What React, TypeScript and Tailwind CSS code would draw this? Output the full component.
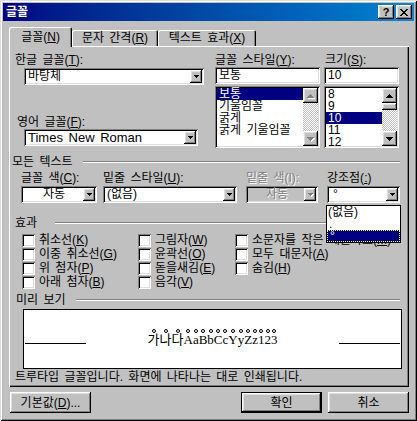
import React from "react";

const sunken =
  "shadow-[inset_1px_1px_0_#808080,inset_-1px_-1px_0_#ffffff,inset_2px_2px_0_#000000,inset_-2px_-2px_0_#dfdfdf]";
const raised =
  "shadow-[inset_-1px_-1px_0_#000000,inset_1px_1px_0_#ffffff,inset_-2px_-2px_0_#808080,inset_2px_2px_0_#dfdfdf]";
const dither =
  "bg-[image:repeating-conic-gradient(#c0c0c0_0_25%,#ffffff_0_50%)] bg-[length:2px_2px]";
const grayText = "text-[#808080] [text-shadow:1px_1px_0_#ffffff]";

const Down = ({ disabled, big }: { disabled?: boolean; big?: boolean }) => (
  <svg
    width={big ? 7 : 5}
    height={big ? 4 : 3}
    shapeRendering="crispEdges"
    className={disabled ? "drop-shadow-[1px_1px_0_#ffffff]" : ""}
  >
    <path
      d={big ? "M0 0h7v1H0zM1 1h5v1H1zM2 2h3v1H2zM3 3h1v1H3z" : "M0 0h5v1H0zM1 1h3v1H1zM2 2h1v1H2z"}
      fill={disabled ? "#808080" : "#000"}
    />
  </svg>
);

const Up = ({ disabled }: { disabled?: boolean }) => (
  <svg width={7} height={4} shapeRendering="crispEdges" className={disabled ? "drop-shadow-[1px_1px_0_#ffffff]" : ""}>
    <path d="M3 0h1v1H3zM2 1h3v1H2zM1 2h5v1H1zM0 3h7v1H0z" fill={disabled ? "#808080" : "#000"} />
  </svg>
);

function ArrowBtn({ disabled }: { disabled?: boolean }) {
  return (
    <div className={`w-[12px] h-[13px] shrink-0 bg-[#c0c0c0] flex items-center justify-center ${raised}`}>
      <Down disabled={disabled} />
    </div>
  );
}

function Combo({
  w,
  children,
  disabled,
  center,
}: {
  w: string;
  children: React.ReactNode;
  disabled?: boolean;
  center?: boolean;
}) {
  return (
    <div className={`${sunken} ${disabled ? "bg-[#c0c0c0]" : "bg-white"} h-[17px] flex items-center p-[2px] ${w}`}>
      <div
        className={`flex-1 pl-[2px] leading-[13px] whitespace-nowrap ${center ? "text-center" : ""} ${
          disabled ? grayText : ""
        }`}
      >
        {children}
      </div>
      <ArrowBtn disabled={disabled} />
    </div>
  );
}

function Check({ children }: { children: React.ReactNode }) {
  return (
    <div className="h-[14px] flex items-center whitespace-nowrap">
      <div className={`w-[13px] h-[13px] shrink-0 bg-white ${sunken}`} />
      <span className="ml-[4px]">{children}</span>
    </div>
  );
}

function Header({ label, gap, ml, w }: { label: string; gap: string; ml: string; w: string }) {
  return (
    <div className={`h-[14px] flex items-center ${ml} ${w}`}>
      <span className="whitespace-nowrap">{label}</span>
      <div className={`flex-1 h-[2px] border-t border-t-[#808080] border-b border-b-white ${gap}`} />
    </div>
  );
}

function Btn({ children, def, className }: { children: React.ReactNode; def?: boolean; className?: string }) {
  return (
    <div
      className={`w-[81px] h-[21px] flex items-center justify-center ${
        def ? "border border-black" : ""
      } ${className ?? ""}`}
    >
      <div className={`w-full h-full flex items-center justify-center ${raised}`}>{children}</div>
    </div>
  );
}

const styles = ["보통", "기울임꼴", "굵게", "굵게 기울임꼴"];
const sizes = ["8", "9", "10", "11", "12"];
const preview = "가나다AaBbCcYyZz123".split("");

export default function App() {
  return (
    <div className="w-[417px] h-[421px] bg-[#c0c0c0] p-[3px] font-[Liberation_Sans,Noto_Sans_CJK_KR,sans-serif] text-[12px] leading-[14px] [word-spacing:2px] text-black select-none shadow-[inset_1px_1px_0_#dfdfdf,inset_-1px_-1px_0_#000000,inset_2px_2px_0_#ffffff,inset_-2px_-2px_0_#808080]">
      {/* title bar */}
      <div className="h-[18px] flex items-center pl-[3px] pr-[2px] bg-linear-to-r from-[#000080] to-[#1084d0]">
        <span className="text-white font-bold flex-1">글꼴</span>
        <div className={`w-[16px] h-[14px] bg-[#c0c0c0] flex items-center justify-center font-bold text-[11px] leading-[11px] ${raised}`}>
          ?
        </div>
        <div className={`w-[16px] h-[14px] ml-[2px] bg-[#c0c0c0] flex items-center justify-center ${raised}`}>
          <svg width={8} height={7} shapeRendering="crispEdges">
            <path
              d="M0 0h2v1H0zM6 0h2v1H6zM1 1h2v1H1zM5 1h2v1H5zM2 2h4v1H2zM3 3h2v1H3zM2 4h4v1H2zM1 5h2v1H1zM5 5h2v1H5zM0 6h2v1H0zM6 6h2v1H6z"
              fill="#000"
            />
          </svg>
        </div>
      </div>

      {/* tabs */}
      <div className="mt-[6px] ml-[6px] h-[19px] flex items-end">
        <div className="relative z-10 w-[63px] h-[20px] -mb-[1px] bg-[#c0c0c0] rounded-t-[2px] flex items-center justify-center pb-[1px] shadow-[inset_1px_1px_0_#ffffff,inset_-1px_0_0_#000000,inset_-2px_0_0_#808080]">
          글꼴(<u>N</u>)
        </div>
        <div className="w-[86px] h-[16px] rounded-t-[2px] flex items-center justify-center shadow-[inset_1px_1px_0_#ffffff,inset_-1px_0_0_#000000,inset_-2px_0_0_#808080]">
          문자 간격(<u>R</u>)
        </div>
        <div className="w-[98px] h-[16px] rounded-t-[2px] flex items-center justify-center shadow-[inset_1px_1px_0_#ffffff,inset_-1px_0_0_#000000,inset_-2px_0_0_#808080]">
          텍스트 효과(<u>X</u>)
        </div>
      </div>

      {/* panel */}
      <div className="ml-[6px] w-[400px] h-[341px] shadow-[inset_1px_1px_0_#ffffff,inset_-1px_-1px_0_#000000,inset_-2px_-2px_0_#808080]">
        {/* fonts row */}
        <div className="pt-[7px] ml-[6px] flex">
          <div className="w-[200px]">
            <div>
              한글 글꼴(<u>T</u>):
            </div>
            <div className="ml-[9px] mt-[1px]">
              <Combo w="w-[180px]">바탕체</Combo>
            </div>
            <div className="mt-[30px] ml-[2px]">
              영어 글꼴(<u>F</u>):
            </div>
            <div className="ml-[9px]">
              <Combo w="w-[174px]">
                <span className="text-[13px]">Times New Roman</span>
              </Combo>
            </div>
          </div>
          <div className="w-[109px]">
            <div>
              글꼴 스타일(<u>Y</u>):
            </div>
            <div className={`w-[105px] h-[17px] bg-white p-[2px] pl-[4px] leading-[13px] ${sunken}`}>보통</div>
            <div className={`mt-[2px] w-[105px] h-[62px] bg-white p-[2px] flex ${sunken}`}>
              <div className="flex-1 flex flex-col">
                {styles.map((s, i) => (
                  <div
                    key={s}
                    className={`h-[12px] leading-[12px] pl-[2px] whitespace-nowrap ${
                      i === 0 ? "bg-[#000080] text-white" : ""
                    }`}
                  >
                    {s}
                  </div>
                ))}
              </div>
              <div className="w-[15px] flex flex-col">
                <div className={`h-[15px] bg-[#c0c0c0] flex items-center justify-center ${raised}`}>
                  <Up disabled />
                </div>
                <div className={`flex-1 ${dither}`} />
                <div className={`h-[15px] bg-[#c0c0c0] flex items-center justify-center ${raised}`}>
                  <Down big disabled />
                </div>
              </div>
            </div>
          </div>
          <div className="w-[75px]">
            <div className="ml-[1px]">
              크기(<u>S</u>):
            </div>
            <div className={`w-[75px] h-[17px] bg-white p-[2px] pl-[4px] leading-[13px] ${sunken}`}>10</div>
            <div className={`mt-[2px] w-[75px] h-[62px] bg-white p-[2px] flex ${sunken}`}>
              <div className="flex-1 flex flex-col">
                {sizes.map((s) => (
                  <div
                    key={s}
                    className={`h-[12px] leading-[12px] pl-[2px] ${s === "10" ? "bg-[#000080] text-white" : ""}`}
                  >
                    {s}
                  </div>
                ))}
              </div>
              <div className="w-[15px] flex flex-col">
                <div className={`h-[15px] bg-[#c0c0c0] flex items-center justify-center ${raised}`}>
                  <Up />
                </div>
                <div className={`h-[7px] bg-[#c0c0c0] ${raised}`} />
                <div className={`flex-1 ${dither}`} />
                <div className={`h-[15px] bg-[#c0c0c0] flex items-center justify-center ${raised}`}>
                  <Down big />
                </div>
              </div>
            </div>
          </div>
        </div>

        {/* all text */}
        <div className="mt-[7px]">
          <Header label="모든 텍스트" gap="ml-[10px]" ml="ml-[3px]" w="w-[388px]" />
        </div>
        <div className="mt-[2px] ml-[12px] flex">
          <div className="w-[82px]">
            <div>
              글꼴 색(<u>C</u>):
            </div>
            <div className="mt-[1px]">
              <Combo w="w-[76px]" center>
                자동
              </Combo>
            </div>
          </div>
          <div className="w-[143px]">
            <div>
              밑줄 스타일(<u>U</u>):
            </div>
            <div className="mt-[1px]">
              <Combo w="w-[134px]">(없음)</Combo>
            </div>
          </div>
          <div className="w-[81px]">
            <div className={grayText}>밑줄 색(I):</div>
            <div className="mt-[1px]">
              <Combo w="w-[72px]" center disabled>
                자동
              </Combo>
            </div>
          </div>
          <div className="w-[73px] relative">
            <div>
              강조점(<u>:</u>)
            </div>
            <div className="mt-[1px]">
              <Combo w="w-[73px]">
                <span className="pl-[2px]">°</span>
              </Combo>
            </div>
            <div className="absolute z-10 left-[-1px] top-[34px] w-[75px] h-[38px] bg-white border border-black flex flex-col">
              <div className="h-[12px] leading-[12px] pl-[1px]">(없음)</div>
              <div className="h-[12px] leading-[12px] pl-[2px]">.</div>
              <div className="h-[12px] leading-[10px] pl-[2px] bg-[#000080] text-white border border-dotted border-[#ffff80]">
                °
              </div>
            </div>
          </div>
        </div>

        {/* effects */}
        <div className="mt-[13px]">
          <Header label="효과" gap="ml-[18px]" ml="ml-[6px]" w="w-[385px]" />
        </div>
        <div className="mt-[3px] ml-[13px] flex">
          <div className="w-[116px] flex flex-col">
            <Check>
              취소선(<u>K</u>)
            </Check>
            <Check>
              이중 취소선(<u>G</u>)
            </Check>
            <Check>
              위 첨자(<u>P</u>)
            </Check>
            <Check>
              아래 첨자(<u>B</u>)
            </Check>
          </div>
          <div className="w-[97px] flex flex-col">
            <Check>
              그림자(<u>W</u>)
            </Check>
            <Check>
              윤곽선(<u>O</u>)
            </Check>
            <Check>
              돋을새김(<u>E</u>)
            </Check>
            <Check>
              음각(<u>V</u>)
            </Check>
          </div>
          <div className="flex-1 flex flex-col">
            <Check>
              소문자를 작은 대문자로(<u>M</u>)
            </Check>
            <Check>
              모두 대문자(<u>A</u>)
            </Check>
            <Check>
              숨김(<u>H</u>)
            </Check>
          </div>
        </div>

        {/* preview */}
        <div className="mt-[4px]">
          <Header label="미리 보기" gap="ml-[10px]" ml="ml-[7px]" w="w-[384px]" />
        </div>
        <div className="mt-[2px] ml-[14px] w-[379px] h-[60px] bg-white border border-black flex items-center px-[1px]">
          <div className="w-[61px] h-px bg-black mt-[9px]" />
          <div className="flex-1 flex justify-center font-[Liberation_Serif,Noto_Sans_CJK_KR,serif] text-[13px] leading-[15px] [word-spacing:0]">
            {preview.map((c, i) => (
              <span key={i} className="relative">
                {c}
                <span className="absolute left-1/2 -translate-x-1/2 top-[-3px] w-[4px] h-[4px] rounded-full border border-black" />
              </span>
            ))}
          </div>
          <div className="w-[61px] h-px bg-black mt-[9px]" />
        </div>
        <div className="mt-[1px] ml-[6px] whitespace-nowrap">
          트루타입 글꼴입니다. 화면에 나타나는 대로 인쇄됩니다.
        </div>
      </div>

      {/* buttons */}
      <div className="mt-[5px] flex">
        <Btn className="ml-[7px]">
          기본값(<u>D</u>)...
        </Btn>
        <Btn def className="ml-[150px]">
          확인
        </Btn>
        <Btn className="ml-[6px]">취소</Btn>
      </div>
    </div>
  );
}
